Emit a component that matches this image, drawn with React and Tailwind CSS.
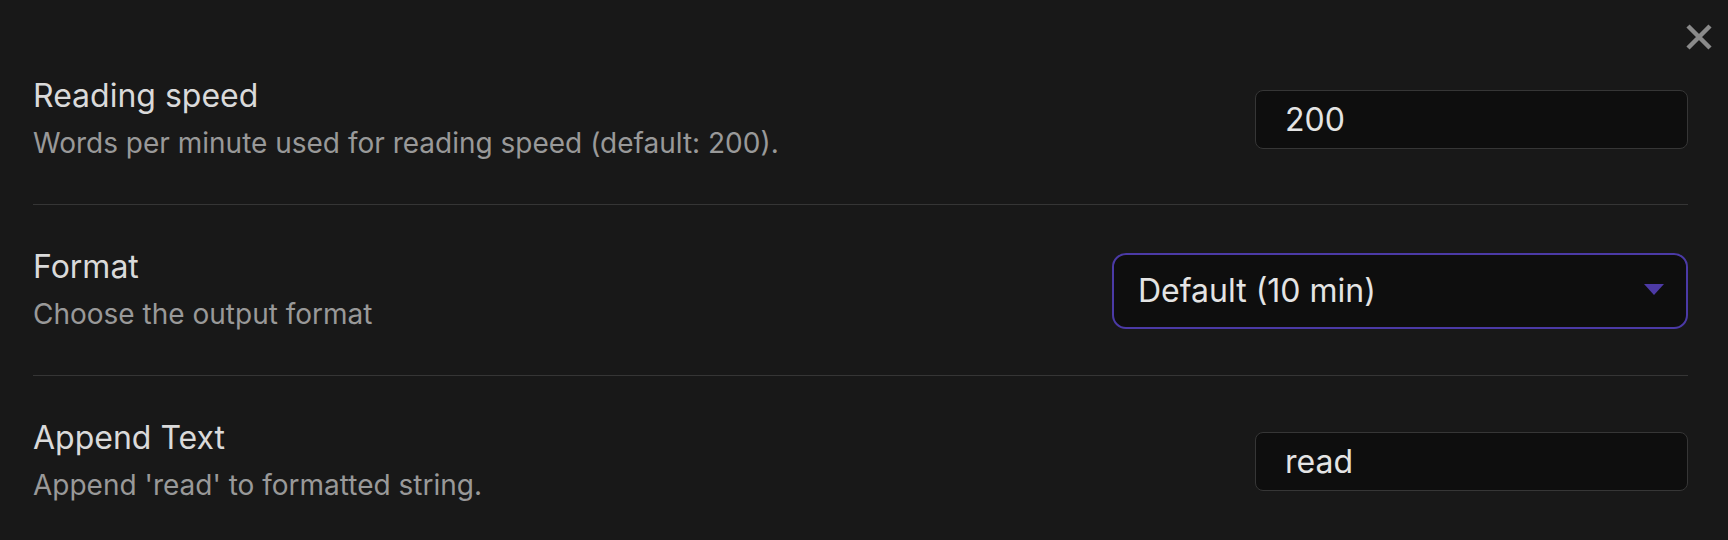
import React, { useState } from 'react';

const SettingRow = ({ title, desc, first, children }) => (
  <div className={`flex items-center justify-between pt-[41px] pb-[40px] ${first ? '' : 'border-t border-[#353535]'}`}>
    <div className="flex flex-col">
      <div className="text-[32px] leading-[42px] text-[#dadada]">{title}</div>
      <div className="mt-[5px] text-[28px] leading-[42px] text-[#999999]">{desc}</div>
    </div>
    {children}
  </div>
);

const App = () => {
  const [speed, setSpeed] = useState('200');
  const [format, setFormat] = useState('default');
  const [append, setAppend] = useState('read');

  return (
    <div className="relative min-h-[540px] bg-[#181818] pt-[34px] pl-[33px] pr-[40px] font-['Inter',sans-serif]">
      <button className="absolute right-[15px] top-[23px] w-[28px] h-[28px] text-[#8a8a8a]">
        <svg viewBox="0 0 28 28" width="28" height="28" fill="none" stroke="currentColor" strokeWidth="4.5">
          <path d="M3 3 L25 25 M25 3 L3 25" />
        </svg>
      </button>

      <SettingRow first title="Reading speed" desc="Words per minute used for reading speed (default: 200).">
        <input
          type="text"
          value={speed}
          onChange={(e) => setSpeed(e.target.value)}
          className="w-[433px] h-[59px] rounded-[8px] border border-[#363636] bg-[#0e0e0e] pl-[29px] text-[32px] text-[#e4e4e4] outline-none"
        />
      </SettingRow>

      <SettingRow title="Format" desc="Choose the output format">
        <div className="relative">
          <select
            value={format}
            onChange={(e) => setFormat(e.target.value)}
            className="appearance-none w-[576px] h-[76px] rounded-[14px] border-2 border-[#4b3aa6] bg-[#0e0e0e] pl-[24px] text-[32px] text-[#e4e4e4] outline-none"
          >
            <option value="default">Default (10 min)</option>
            <option value="compact">Compact (10m)</option>
            <option value="simple">Simple (10 min read)</option>
          </select>
          <svg className="absolute right-[24px] top-[31px] pointer-events-none" width="20" height="11" viewBox="0 0 20 11">
            <path d="M0 0 H20 L10 11 Z" fill="#4d3aa6" />
          </svg>
        </div>
      </SettingRow>

      <SettingRow title="Append Text" desc="Append 'read' to formatted string.">
        <input
          type="text"
          value={append}
          onChange={(e) => setAppend(e.target.value)}
          className="w-[433px] h-[59px] rounded-[8px] border border-[#363636] bg-[#0e0e0e] pl-[29px] text-[32px] text-[#e4e4e4] outline-none"
        />
      </SettingRow>
    </div>
  );
};

export default App;
